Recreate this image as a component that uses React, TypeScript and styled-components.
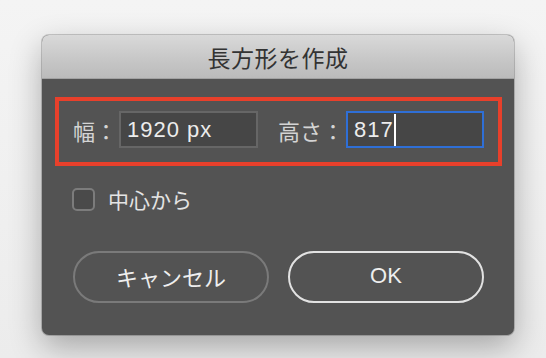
import styled, { createGlobalStyle } from "styled-components";

const GlobalStyle = createGlobalStyle`
  html, body {
    margin: 0;
    padding: 0;
    background: #f1f1f1;
    font-family: "Liberation Sans", "Noto Sans CJK JP", sans-serif;
  }
`;

const App = () => {
  return (
    <Page>
      <GlobalStyle />
      <Dialog>
        <TitleBar>長方形を作成</TitleBar>
        <Body>
          <SizeBox>
            <Label>幅：</Label>
            <Field $width={139}>1920 px</Field>
            <Label $gapLeft={20}>高さ：</Label>
            <Field $width={138} $focused>
              817
              <Caret />
            </Field>
          </SizeBox>
          <CheckRow>
            <CheckBox />
            <CheckLabel>中心から</CheckLabel>
          </CheckRow>
          <Buttons>
            <Button>キャンセル</Button>
            <Button $primary>OK</Button>
          </Buttons>
        </Body>
      </Dialog>
    </Page>
  );
};

const Page = styled.div`
  width: 546px;
  height: 358px;
  box-sizing: border-box;
  padding: 35px 0 0 42px;
  background: linear-gradient(180deg, #f4f4f4 0%, #ececec 100%);
  overflow: hidden;
`;

const Dialog = styled.div`
  width: 472px;
  height: 300px;
  display: flex;
  flex-direction: column;
  border-radius: 7px;
  overflow: hidden;
  background: #535353;
  box-shadow: 0 0 0 1px rgba(0, 0, 0, 0.18), 0 12px 32px rgba(0, 0, 0, 0.3);
`;

const TitleBar = styled.div`
  height: 43px;
  flex-shrink: 0;
  display: flex;
  align-items: center;
  justify-content: center;
  background: linear-gradient(180deg, #d9d9d9 0%, #c6c6c6 60%, #bbbbbb 100%);
  border-bottom: 1px solid #a2a2a2;
  color: #333333;
  font-size: 23px;
  letter-spacing: 0.5px;
`;

const Body = styled.div`
  flex: 1;
  display: flex;
  flex-direction: column;
  padding: 18px 12px 0 13px;
`;

const SizeBox = styled.div`
  height: 69px;
  box-sizing: border-box;
  border: 4px solid #e8402b;
  display: flex;
  align-items: center;
  padding: 0 0 4px 14px;
`;

const Label = styled.span<{ $gapLeft?: number }>`
  font-size: 22px;
  color: #d4d4d4;
  margin-left: ${(p) => p.$gapLeft ?? 0}px;
  margin-right: 2px;
  white-space: nowrap;
`;

const Field = styled.div<{ $width: number; $focused?: boolean }>`
  position: relative;
  width: ${(p) => p.$width}px;
  height: 37px;
  box-sizing: border-box;
  display: flex;
  align-items: center;
  padding-left: 6px;
  background: #464646;
  border: ${(p) => (p.$focused ? "2px solid #2f6fd6" : "2px solid #666666")};
  color: #ececec;
  font-size: 22px;
  letter-spacing: 1px;
`;

const Caret = styled.span`
  display: inline-block;
  width: 2px;
  height: 32px;
  background: #ffffff;
`;

const CheckRow = styled.div`
  display: flex;
  align-items: center;
  gap: 13px;
  margin: 18px 0 0 17px;
`;

const CheckBox = styled.div`
  width: 23px;
  height: 23px;
  box-sizing: border-box;
  border: 2px solid #7c7c7c;
  border-radius: 5px;
  background: #4a4a4a;
`;

const CheckLabel = styled.span`
  font-size: 21px;
  color: #e4e4e4;
`;

const Buttons = styled.div`
  display: flex;
  gap: 19px;
  margin: 37px 0 0 18px;
`;

const Button = styled.button<{ $primary?: boolean }>`
  width: 196px;
  height: 52px;
  border-radius: 26px;
  background: transparent;
  border: 2px solid ${(p) => (p.$primary ? "#e2e2e2" : "#7a7a7a")};
  color: #eeeeee;
  font-family: "Liberation Sans", "Noto Sans CJK JP", sans-serif;
  font-size: 22px;
  padding: 0 0 3px;
  cursor: pointer;
`;

export default App;
